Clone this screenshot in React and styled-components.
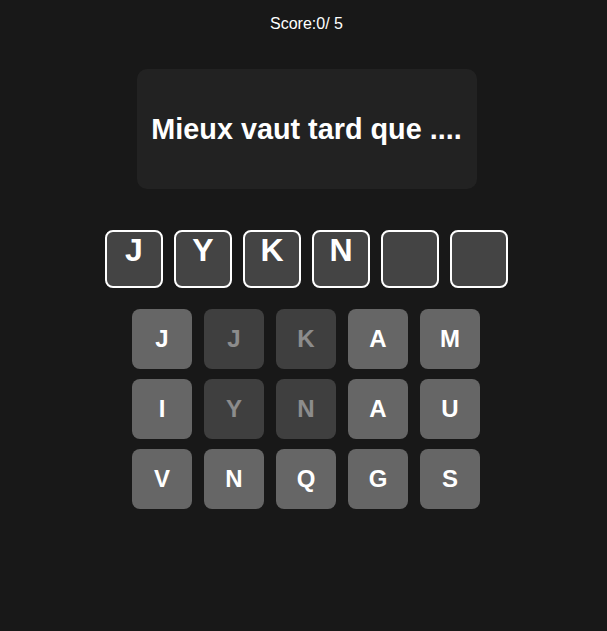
import styled, { createGlobalStyle } from 'styled-components'

const GlobalStyle = createGlobalStyle`
  html, body {
    margin: 0;
    padding: 0;
    background-color: #181818;
  }
  body {
    font-family: "Liberation Sans", Arial, sans-serif;
    color: #ffffff;
  }
`

const Page = styled.div`
  display: flex;
  flex-direction: column;
  align-items: center;
  min-height: 631px;
  padding: 15px 0 0 6px;
  box-sizing: border-box;
`

const Score = styled.div`
  font-size: 16px;
  line-height: 18px;
`

const QuestionCard = styled.div`
  display: flex;
  align-items: center;
  justify-content: center;
  width: 340px;
  height: 120px;
  margin-top: 36px;
  border-radius: 10px;
  background-color: #222222;
`

const Question = styled.h2`
  margin: 0;
  font-size: 28.8px;
  font-weight: bold;
`

const AnswerRow = styled.div`
  display: flex;
  gap: 11px;
  margin-top: 41px;
`

const Tile = styled.div`
  width: 58px;
  height: 58px;
  box-sizing: border-box;
  border: 2px solid #ffffff;
  border-radius: 8px;
  background-color: #444444;
  text-align: center;
  font-size: 32px;
  font-weight: bold;
`

const Keyboard = styled.div`
  display: grid;
  grid-template-columns: repeat(5, 60px);
  gap: 10px 12px;
  margin: 21px 1px 0 0;
`

const Key = styled.button`
  display: flex;
  align-items: center;
  justify-content: center;
  width: 60px;
  height: 60px;
  padding: 0;
  border: none;
  border-radius: 8px;
  background-color: #666666;
  color: #ffffff;
  font-family: "Liberation Sans", Arial, sans-serif;
  font-size: 24px;
  font-weight: bold;
  cursor: pointer;
  opacity: ${(props) => (props.$used ? 0.5 : 1)};
`

const answer = ['J', 'Y', 'K', 'N', '', '']

const keys = [
  { letter: 'J' },
  { letter: 'J', used: true },
  { letter: 'K', used: true },
  { letter: 'A' },
  { letter: 'M' },
  { letter: 'I' },
  { letter: 'Y', used: true },
  { letter: 'N', used: true },
  { letter: 'A' },
  { letter: 'U' },
  { letter: 'V' },
  { letter: 'N' },
  { letter: 'Q' },
  { letter: 'G' },
  { letter: 'S' }
]

const App = () => {
  return (
    <>
      <GlobalStyle />
      <Page>
        <Score>Score:0/ 5</Score>
        <QuestionCard>
          <Question>Mieux vaut tard que ....</Question>
        </QuestionCard>
        <AnswerRow>
          {answer.map((letter, i) => (
            <Tile key={i}>{letter}</Tile>
          ))}
        </AnswerRow>
        <Keyboard>
          {keys.map((k, i) => (
            <Key key={i} $used={k.used} disabled={k.used}>
              {k.letter}
            </Key>
          ))}
        </Keyboard>
      </Page>
    </>
  )
}

export default App
